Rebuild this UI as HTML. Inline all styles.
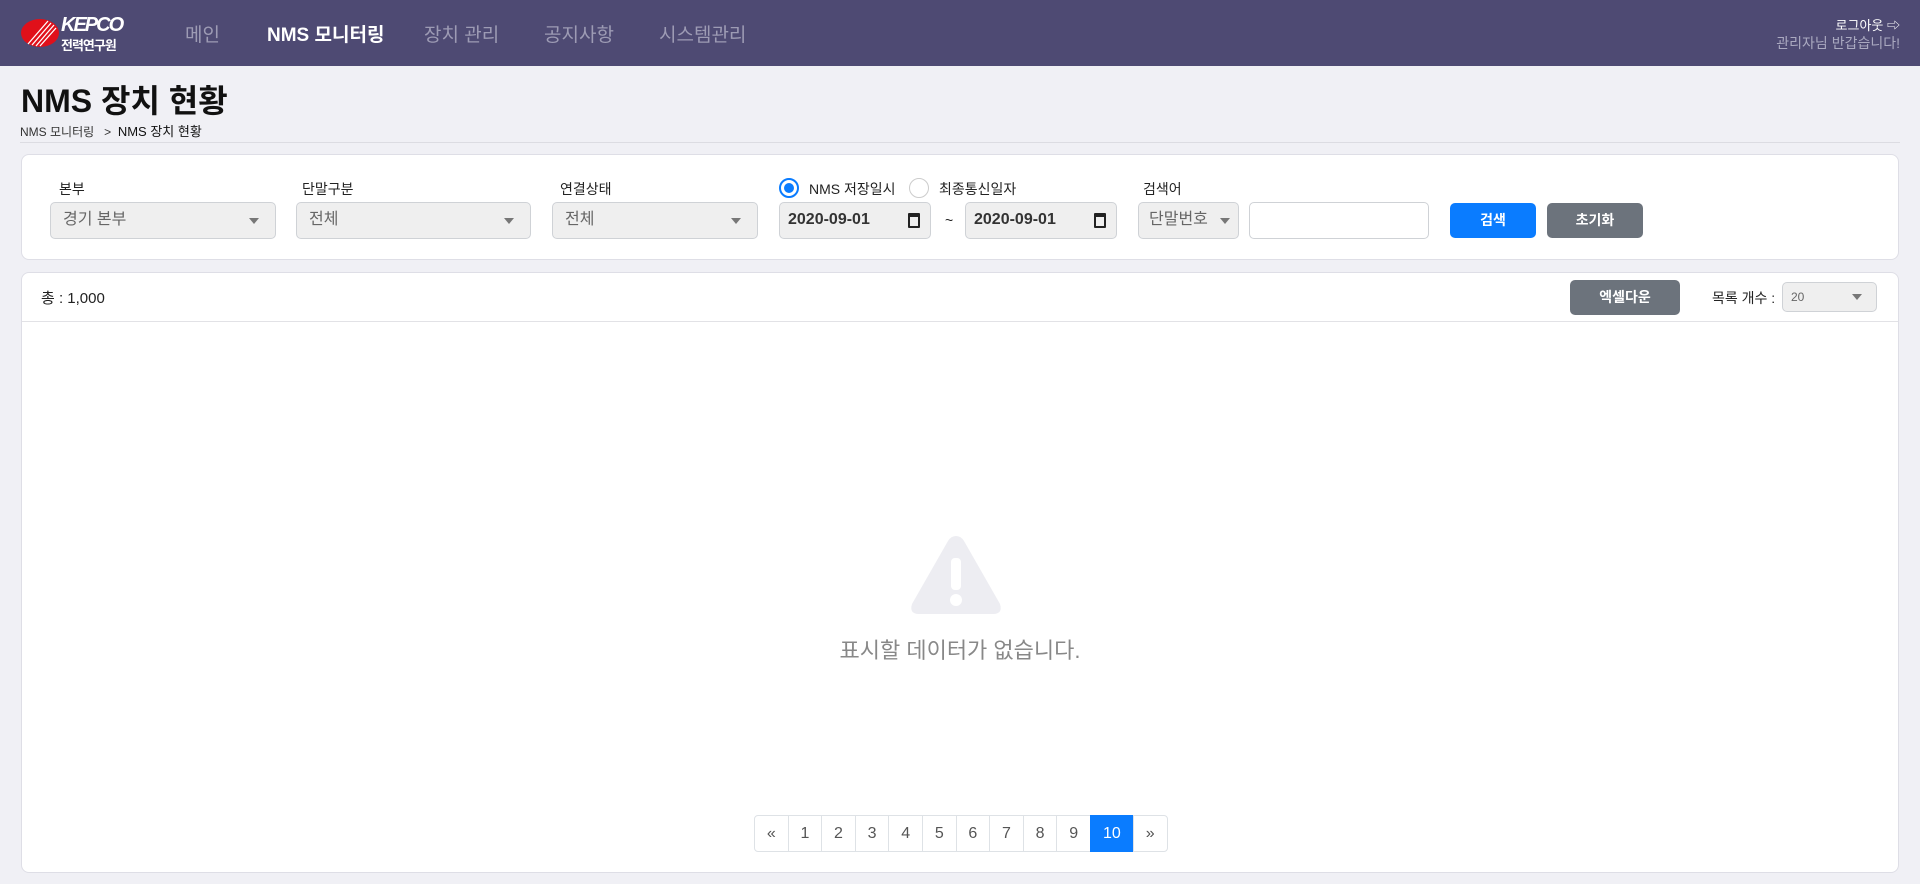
<!DOCTYPE html>
<html><head><meta charset="utf-8"><style>
*{box-sizing:border-box;margin:0;padding:0}
body{width:1920px;height:884px;background:#f0f0f5;font-family:"Liberation Sans","Noto Sans CJK KR",sans-serif;position:relative;overflow:hidden;color:#222}
.a{position:absolute}
.hdr{left:0;top:0;width:1920px;height:66px;background:#4e4a73}
.nav{top:20px;font-size:19px;color:#9d9bb4}
.card{background:#fff;border:1px solid #dedee6;border-radius:8px}
.lbl{font-size:14px;top:179px;color:#222}
.sel{background:#efefef;border:1px solid #cfd2d6;border-radius:5px;top:202px;height:37px;font-size:16px;color:#666;padding:0 12px;line-height:34px}
.sel .ar{position:absolute;right:16px;top:15px;border-left:5px solid transparent;border-right:5px solid transparent;border-top:6px solid #777}
.btn{border-radius:5px;color:#fff;font-weight:bold;font-size:14px;text-align:center}
.pg{height:37px;width:34.6px;border:1px solid #dee2e6;margin-left:-1px;background:#fff;font-size:16px;color:#555;text-align:center;line-height:35px}
</style></head><body>
<div class="a hdr"></div>
<svg class="a" style="left:20px;top:18px" width="40" height="30" viewBox="0 0 40 30"><ellipse cx="20" cy="15" rx="19" ry="14" fill="#e0101a"/><g stroke="#fff" stroke-width="1.3"><line x1="8" y1="26" x2="28" y2="3"/><line x1="12" y1="27" x2="31" y2="5"/><line x1="16" y1="28" x2="34" y2="7"/><line x1="20" y1="28" x2="36" y2="10"/></g></svg>
<div class="a" style="left:61px;top:14px;color:#fff;font-weight:bold;font-size:20px;letter-spacing:-2px;font-style:italic">KEPCO</div>
<div class="a" style="left:61px;top:35px;color:#fff;font-weight:bold;font-size:13px;letter-spacing:-1px">전력연구원</div>
<div class="a nav" style="left:185px">메인</div>
<div class="a nav" style="left:267px;color:#fff;font-weight:bold">NMS 모니터링</div>
<div class="a nav" style="left:424px">장치 관리</div>
<div class="a nav" style="left:544px">공지사항</div>
<div class="a nav" style="left:659px">시스템관리</div>
<div class="a" style="right:20px;top:15px;font-size:13px;color:#fff">로그아웃 ⇨</div>
<div class="a" style="right:20px;top:33px;font-size:14px;color:#aaa9c0">관리자님 반갑습니다!</div>
<div class="a" style="left:21px;top:76px;font-size:32px;font-weight:bold;color:#111">NMS 장치 현황</div>
<div class="a" style="left:20px;top:121px;font-size:12px;color:#333">NMS 모니터링 &nbsp; &gt; &nbsp;<span style="font-size:13px;color:#111">NMS 장치 현황</span></div>
<div class="a" style="left:20px;top:142px;width:1880px;height:1px;background:#dcdce2"></div>
<div class="a card" style="left:21px;top:154px;width:1878px;height:106px"></div>
<div class="a lbl" style="left:59px">본부</div>
<div class="a lbl" style="left:302px">단말구분</div>
<div class="a lbl" style="left:560px">연결상태</div>
<div class="a" style="left:779px;top:178px;width:20px;height:20px;border-radius:50%;border:2px solid #0a7cff;background:#fff"><div class="a" style="left:3px;top:3px;width:10px;height:10px;border-radius:50%;background:#0a7cff"></div></div>
<div class="a lbl" style="left:809px">NMS 저장일시</div>
<div class="a" style="left:909px;top:178px;width:20px;height:20px;border-radius:50%;border:1px solid #ccc;background:#fff"></div>
<div class="a lbl" style="left:939px">최종통신일자</div>
<div class="a lbl" style="left:1143px">검색어</div>
<div class="a sel" style="left:50px;width:226px">경기 본부<span class="ar"></span></div>
<div class="a sel" style="left:296px;width:235px">전체<span class="ar"></span></div>
<div class="a sel" style="left:552px;width:206px">전체<span class="ar"></span></div>
<div class="a sel" style="left:779px;width:152px;color:#333;font-weight:bold;padding-left:8px">2020-09-01<span class="a" style="right:10px;top:10px;width:12px;height:15px;border:2px solid #222;border-top-width:4px;border-radius:1px"></span></div>
<div class="a" style="left:945px;top:212px;font-size:14px">~</div>
<div class="a sel" style="left:965px;width:152px;color:#333;font-weight:bold;padding-left:8px">2020-09-01<span class="a" style="right:10px;top:10px;width:12px;height:15px;border:2px solid #222;border-top-width:4px;border-radius:1px"></span></div>
<div class="a sel" style="left:1138px;width:101px;padding-left:10px">단말번호<span class="ar" style="right:8px"></span></div>
<div class="a" style="left:1249px;top:202px;width:180px;height:37px;border:1px solid #cfd2d6;border-radius:5px;background:#fff"></div>
<div class="a btn" style="left:1450px;top:203px;width:86px;height:35px;line-height:35px;background:#0a7cff">검색</div>
<div class="a btn" style="left:1547px;top:203px;width:96px;height:35px;line-height:35px;background:#6c737c">초기화</div>
<div class="a card" style="left:21px;top:272px;width:1878px;height:601px"></div>
<div class="a" style="left:41px;top:287px;font-size:15px;color:#222">총 : 1,000</div>
<div class="a btn" style="left:1570px;top:280px;width:110px;height:35px;line-height:35px;background:#6c737c">엑셀다운</div>
<div class="a" style="left:1712px;top:288px;font-size:14px">목록 개수 :</div>
<div class="a sel" style="left:1782px;top:282px;width:95px;height:30px;font-size:12px;padding:0 8px;line-height:28px">20<span class="ar" style="top:11px;right:14px"></span></div>
<div class="a" style="left:22px;top:321px;width:1876px;height:1px;background:#e2e2e6"></div>
<svg class="a" style="left:908px;top:532px" width="96" height="86" viewBox="0 0 96 86"><path d="M48 4 Q53 4 56 9 L92 72 Q95 82 85 82 L11 82 Q1 82 4 72 L40 9 Q43 4 48 4Z" fill="#ededf2"/><rect x="43" y="26" width="10" height="32" rx="4" fill="#fff"/><circle cx="48" cy="68" r="6" fill="#fff"/></svg>
<div class="a" style="left:0;width:1920px;top:633px;text-align:center;font-size:22px;color:#888">표시할 데이터가 없습니다.</div>
<div class="a" style="left:755px;top:815px;display:flex">
<div class="pg" style="border-radius:4px 0 0 4px">«</div><div class="pg">1</div><div class="pg">2</div><div class="pg">3</div><div class="pg">4</div><div class="pg">5</div><div class="pg">6</div><div class="pg">7</div><div class="pg">8</div><div class="pg">9</div><div class="pg" style="width:44px;background:#0a7cff;border-color:#0a7cff;color:#fff">10</div><div class="pg" style="border-radius:0 4px 4px 0">»</div>
</div>
</body></html>
